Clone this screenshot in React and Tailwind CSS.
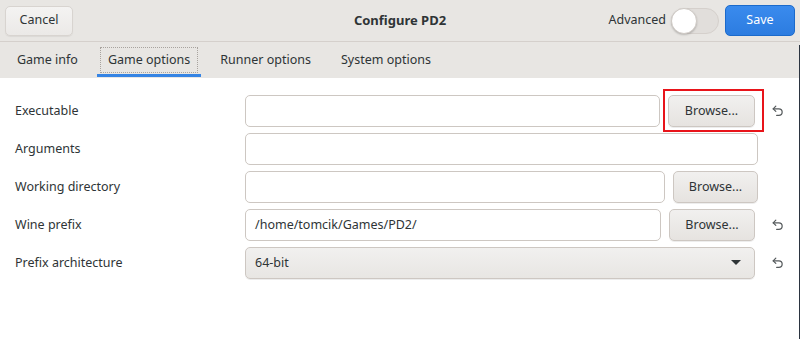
import { useState } from "react";

function UndoIcon() {
  return (
    <svg width="14" height="14" viewBox="0 0 16 16" fill="none" stroke="#555a5c" strokeWidth="1.4" strokeLinecap="round" strokeLinejoin="round">
      <path d="M5.5 2.5 2.5 5.5l3 3" />
      <path d="M2.5 5.5h6.5a3.75 3.75 0 0 1 0 7.5H6.5" />
    </svg>
  );
}

function Browse({ w = "w-[87px]" }) {
  return (
    <button className={`${w} h-[32px] shrink-0 rounded-[5px] border border-[#cdc7c2] bg-gradient-to-b from-[#f1f0ef] to-[#e6e3e0] text-[#2e3436] shadow-[0_1px_0_rgba(0,0,0,0.07)]`}>
      Browse...
    </button>
  );
}

function Row({ label, undo, children }) {
  return (
    <div className="flex items-center h-[32px] pl-[15px]">
      <div className="w-[230px] shrink-0 text-[#2e3436]">{label}</div>
      <div className="flex-1 flex gap-2 min-w-0">{children}</div>
      {undo ? (
        <div className="w-[45px] shrink-0 flex justify-center">
          <UndoIcon />
        </div>
      ) : (
        <div className="w-[42px] shrink-0" />
      )}
    </div>
  );
}

function Entry({ value }) {
  return (
    <div className="flex-1 h-[32px] rounded-[5px] border border-[#cdc7c2] bg-white px-[9px] flex items-center text-[#2e3436]">
      {value}
    </div>
  );
}

export default function App() {
  const [tab] = useState("Game options");
  const tabs = ["Game info", "Game options", "Runner options", "System options"];

  return (
    <div
      className="relative w-[800px] h-[339px] bg-white overflow-hidden text-[12.5px]"
      style={{ fontFamily: "'Noto Sans', 'Open Sans', sans-serif" }}
    >
      {/* header bar */}
      <div className="h-[42px] flex items-center justify-between px-[5px] bg-[#e8e6e3] border-b border-[#d5d0cc]">
        <button className="w-[68px] h-[30px] rounded-[5px] border border-[#d8d4d0] bg-gradient-to-b from-[#f4f3f2] to-[#ebe9e7] text-[#2e3436] shadow-[0_1px_1px_rgba(0,0,0,0.06)]">
          Cancel
        </button>
        <div className="absolute left-0 right-0 top-0 h-[42px] flex items-center justify-center pointer-events-none">
          <span className="font-bold text-[#2e3436] text-[13px]">Configure PD2</span>
        </div>
        <div className="flex items-center">
          <span className="text-[#2e3436] mr-[5px]">Advanced</span>
          <div className="w-[48px] h-[26px] rounded-full border border-[#d5d0cc] bg-[#e1dedb] flex items-center mr-[6px]">
            <div className="w-[26px] h-[26px] -ml-px rounded-full bg-white border border-[#cfcac5] shadow-[0_1px_2px_rgba(0,0,0,0.2)]" />
          </div>
          <button className="w-[70px] h-[31px] rounded-[5px] border border-[#1b6acb] bg-gradient-to-b from-[#3a8bee] to-[#2c7ce0] text-white">
            Save
          </button>
        </div>
      </div>

      {/* tabs */}
      <div className="h-[36px] flex items-end pl-[6px] gap-[8px] bg-[#e8e6e3]">
        {tabs.map((t) => (
          <div key={t} className="relative h-[36px] px-[3px] flex items-center">
            <div
              className={`px-[7px] h-[26px] flex items-center text-[#2e3436] ${
                t === tab ? "border border-dotted border-[#a8a39e]" : "border border-transparent"
              }`}
            >
              {t}
            </div>
            {t === tab && (
              <div className="absolute left-0 right-0 bottom-[1px] h-[3px] bg-[#3584e4]" />
            )}
          </div>
        ))}
      </div>

      {/* options */}
      <div className="pt-[17px] flex flex-col gap-[6px]">
        <Row label="Executable" undo>
          <Entry />
          <Browse />
        </Row>
        <Row label="Arguments">
          <Entry />
        </Row>
        <Row label="Working directory">
          <Entry />
          <Browse w="w-[85px]" />
        </Row>
        <Row label="Wine prefix" undo>
          <Entry value="/home/tomcik/Games/PD2/" />
          <Browse w="w-[86px]" />
        </Row>
        <Row label="Prefix architecture" undo>
          <div className="flex-1 h-[32px] rounded-[5px] border border-[#cdc7c2] bg-gradient-to-b from-[#f1f0ef] to-[#e8e6e3] px-[9px] flex items-center justify-between text-[#2e3436] shadow-[0_1px_0_rgba(0,0,0,0.07)]">
            <span>64-bit</span>
            <svg width="10" height="6" viewBox="0 0 10 6" className="mr-[4px]">
              <path d="M0 0h10L5 5z" fill="#2e3436" />
            </svg>
          </div>
        </Row>
      </div>

      {/* annotation box */}
      <div className="absolute left-[663px] top-[89px] w-[101px] h-[43px] border-2 border-[#e8141a] pointer-events-none" />

      {/* window edge */}
      <div className="absolute right-0 top-[45px] bottom-0 w-px bg-[#2b3440]" />
    </div>
  );
}
